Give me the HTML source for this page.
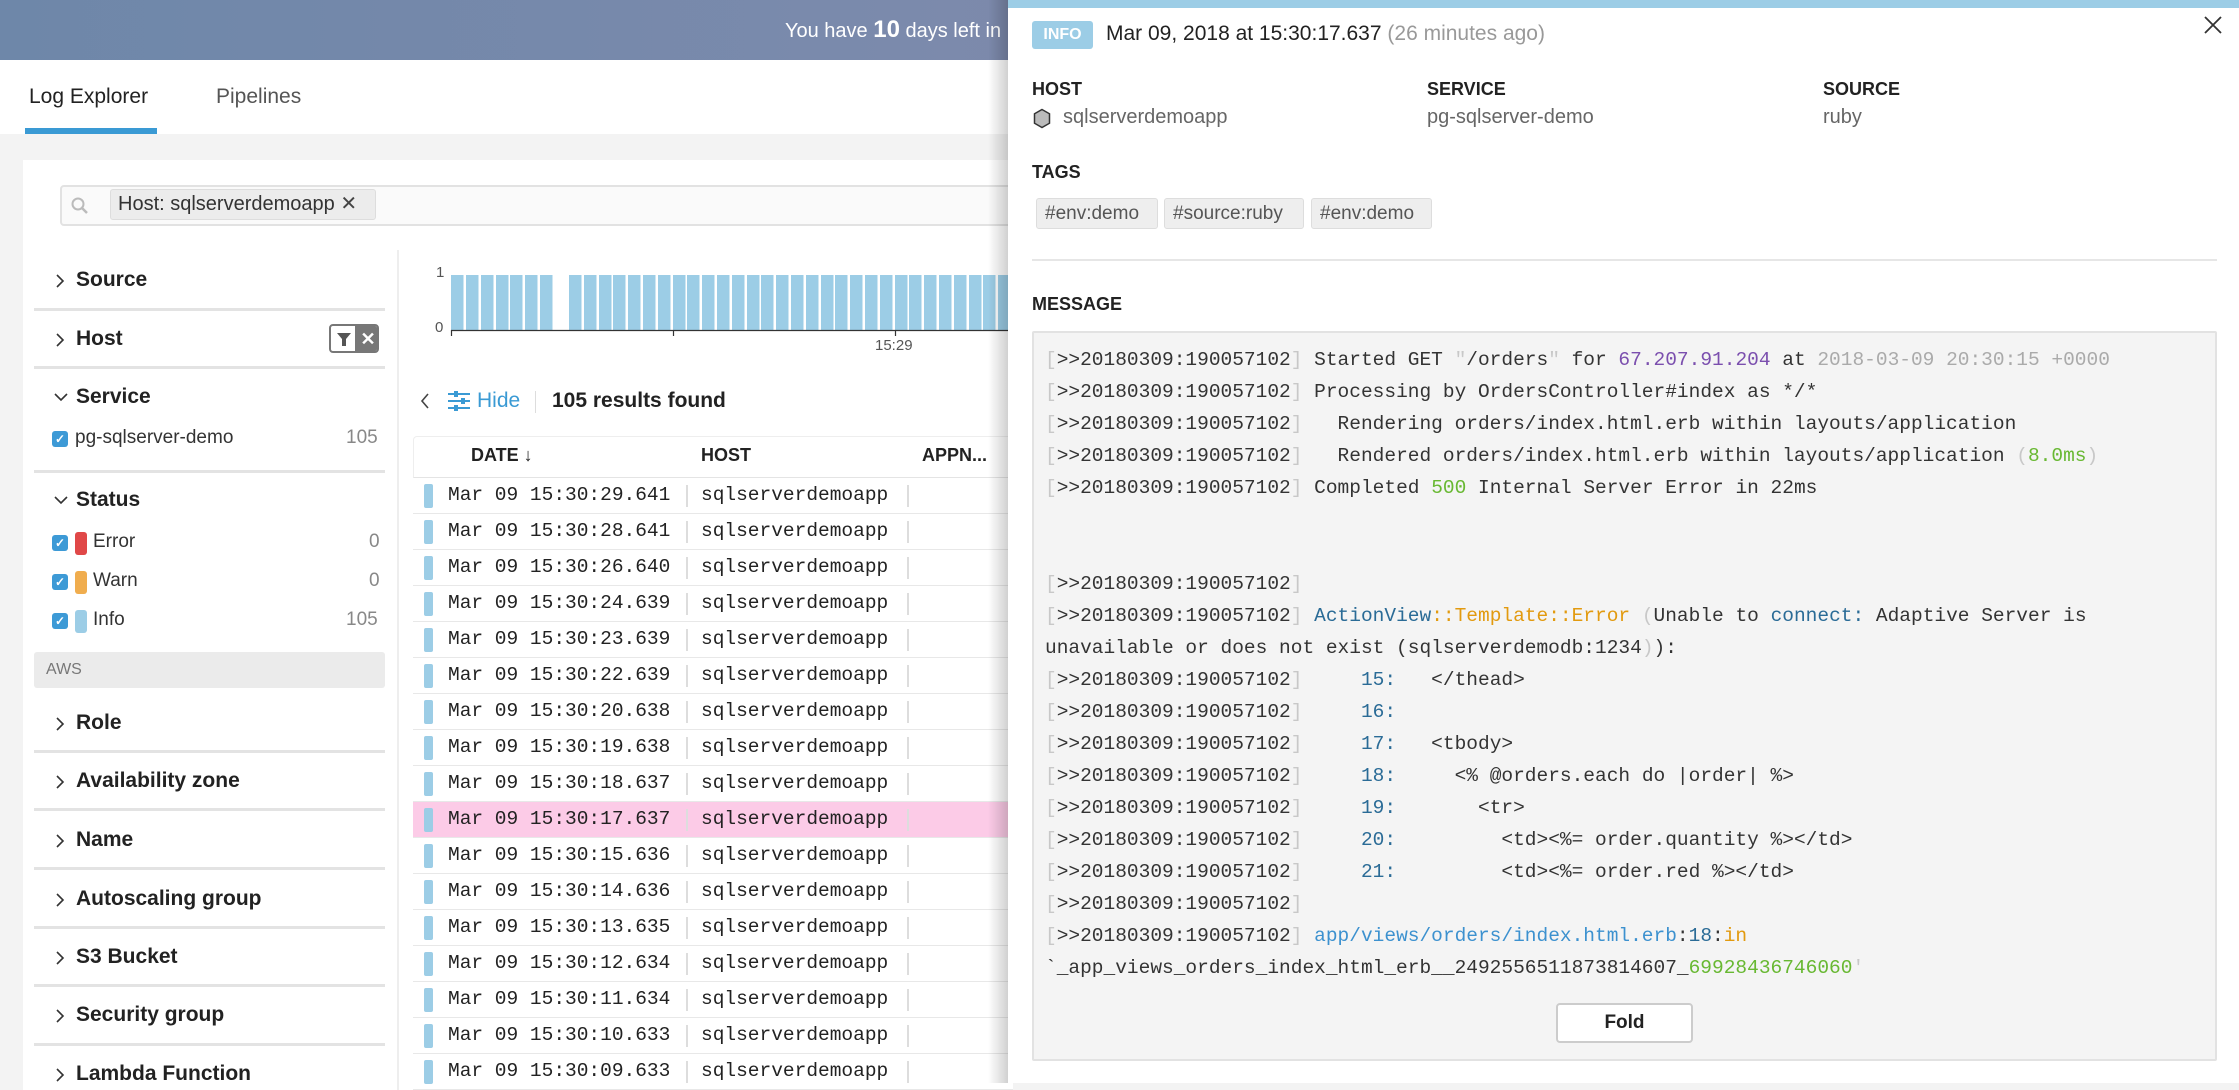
<!DOCTYPE html>
<html><head><meta charset="utf-8"><style>
*{margin:0;padding:0;box-sizing:border-box}
body{width:2239px;height:1083px;overflow:hidden;position:relative;background:#f3f3f3;font-family:"Liberation Sans",sans-serif;color:#222}
.a{position:absolute;white-space:nowrap}
.mono{font-family:"Liberation Mono","DejaVu Sans Mono",monospace}
.sec{position:absolute;left:34px;width:351px;font-weight:bold;font-size:21px;color:#222}
.sec svg{position:absolute;left:20px;top:-6px}
.sec .t{position:absolute;left:42px;top:-12px}
.div{position:absolute;left:34px;width:351px;height:3px;background:#e3e3e3}
.cb{position:absolute;left:52px;width:16px;height:16px;background:#3d9ad6;border-radius:3px;color:#fff;font-size:12px;line-height:16px;text-align:center;font-weight:bold}
.bar{position:absolute;width:12px;height:23px;border-radius:3px}
.row{position:absolute;left:413px;width:600px;height:36px;border-bottom:1px solid #e8e8e8;background:#fff;font-size:19.5px}
.row .m{position:absolute;left:11px;top:6px;width:9px;height:24px;background:#9ccde6;border-radius:2px}
.row .d{position:absolute;left:35px;top:6px}
.row .s1{position:absolute;left:273px;top:7px;width:2px;height:22px;background:#ddd}
.row .h{position:absolute;left:288px;top:6px}
.row .s2{position:absolute;left:494px;top:7px;width:2px;height:22px;background:#ddd}
.code{position:absolute;left:1045px;top:344px;font-size:19.5px;line-height:32px;color:#333;white-space:pre}
.g{color:#c8c8c8}.pu{color:#7b4fae}.lg{color:#aaa}.gr{color:#68b832}.bl{color:#2a6b96}.or{color:#e29a0f}.lb{color:#3c91cf}
.tag{position:absolute;top:198px;height:31px;background:#eee;border:1px solid #ddd;border-radius:3px;font-size:19px;color:#555;line-height:29px;padding:0 8px}
.lab{position:absolute;font-weight:bold;font-size:18px;color:#222}
.val{position:absolute;font-size:20px;color:#666}
</style></head><body>
<div class="a" style="left:0;top:0;width:2239px;height:60px;background:linear-gradient(90deg,#6e87a9 0%,#7b8aac 40%,#8a80a1 100%)"></div>
<div class="a" style="left:785px;top:16px;color:#fff;font-size:20px">You have <b style="font-size:24px">10</b> days left in</div>
<div class="a" style="left:0;top:60px;width:1010px;height:74px;background:#fff"></div>
<div class="a" style="left:29px;top:85px;font-size:21px;color:#222">Log Explorer</div>
<div class="a" style="left:216px;top:85px;font-size:21px;color:#555">Pipelines</div>
<div class="a" style="left:25px;top:128px;width:132px;height:6px;background:#3a9ad4"></div>
<div class="a" style="left:23px;top:160px;width:990px;height:930px;background:#fff"></div>
<div class="a" style="left:60px;top:185px;width:960px;height:41px;border:2px solid #e2e2e2;border-radius:4px;background:#fafafa"></div>
<svg class="a" style="left:70px;top:196px" width="20" height="20" viewBox="0 0 20 20"><circle cx="8" cy="8" r="5.5" fill="none" stroke="#bbb" stroke-width="2"/><path d="M12 12l5 5" stroke="#bbb" stroke-width="2.5"/></svg>
<div class="a" style="left:110px;top:189px;width:266px;height:31px;background:#ececec;border:1px solid #ddd;border-radius:3px;font-size:20px;color:#333;line-height:29px;padding-left:7px">Host: sqlserverdemoapp <span style="color:#444">✕</span></div>
<div class="a" style="left:397px;top:250px;width:2px;height:840px;background:#eee"></div>
<div class="sec" style="top:280px"><svg width="12" height="14"><path d="M3 1l6 6-6 6" fill="none" stroke="#333" stroke-width="1.6"/></svg><span class="t">Source</span></div>
<div class="div" style="top:308px"></div>
<div class="sec" style="top:339px"><svg width="12" height="14"><path d="M3 1l6 6-6 6" fill="none" stroke="#333" stroke-width="1.6"/></svg><span class="t">Host</span></div>
<div class="a" style="left:329px;top:324px;width:50px;height:29px;border:2px solid #777;border-radius:4px;background:#fff;overflow:hidden"><div class="a" style="left:24px;top:0;width:26px;height:29px;background:#777;color:#fff;font-size:18px;text-align:center;line-height:26px;font-weight:bold">✕</div><svg class="a" style="left:5px;top:5px" width="16" height="16" viewBox="0 0 16 16"><path d="M1 2h14l-5 6v7h-4V8z" fill="#555"/></svg></div>
<div class="div" style="top:366px"></div>
<div class="sec" style="top:397px"><svg width="14" height="12"><path d="M1 3l6 6 6-6" fill="none" stroke="#333" stroke-width="1.6"/></svg><span class="t">Service</span></div>
<div class="cb" style="top:431px">✓</div>
<div class="a" style="left:75px;top:427px;font-size:19px;color:#333">pg-sqlserver-demo</div>
<div class="a" style="left:346px;top:427px;font-size:19px;color:#888">105</div>
<div class="div" style="top:470px"></div>
<div class="sec" style="top:500px"><svg width="14" height="12"><path d="M1 3l6 6 6-6" fill="none" stroke="#333" stroke-width="1.6"/></svg><span class="t">Status</span></div>
<div class="cb" style="top:535px">✓</div><div class="bar" style="left:75px;top:532px;background:#e04848"></div>
<div class="a" style="left:93px;top:531px;font-size:19px;color:#333">Error</div><div class="a" style="left:369px;top:531px;font-size:19px;color:#888">0</div>
<div class="cb" style="top:574px">✓</div><div class="bar" style="left:75px;top:571px;background:#f0ad4e"></div>
<div class="a" style="left:93px;top:570px;font-size:19px;color:#333">Warn</div><div class="a" style="left:369px;top:570px;font-size:19px;color:#888">0</div>
<div class="cb" style="top:613px">✓</div><div class="bar" style="left:75px;top:610px;background:#9ccde6"></div>
<div class="a" style="left:93px;top:609px;font-size:19px;color:#333">Info</div><div class="a" style="left:346px;top:609px;font-size:19px;color:#888">105</div>
<div class="a" style="left:34px;top:652px;width:351px;height:36px;background:#ebebeb;border-radius:3px;font-size:16px;color:#777;line-height:36px;padding-left:12px">AWS</div>
<div class="sec" style="top:723px"><svg width="12" height="14"><path d="M3 1l6 6-6 6" fill="none" stroke="#333" stroke-width="1.6"/></svg><span class="t">Role</span></div>
<div class="div" style="top:750px"></div>
<div class="sec" style="top:781px"><svg width="12" height="14"><path d="M3 1l6 6-6 6" fill="none" stroke="#333" stroke-width="1.6"/></svg><span class="t">Availability zone</span></div>
<div class="div" style="top:808px"></div>
<div class="sec" style="top:840px"><svg width="12" height="14"><path d="M3 1l6 6-6 6" fill="none" stroke="#333" stroke-width="1.6"/></svg><span class="t">Name</span></div>
<div class="div" style="top:867px"></div>
<div class="sec" style="top:899px"><svg width="12" height="14"><path d="M3 1l6 6-6 6" fill="none" stroke="#333" stroke-width="1.6"/></svg><span class="t">Autoscaling group</span></div>
<div class="div" style="top:926px"></div>
<div class="sec" style="top:957px"><svg width="12" height="14"><path d="M3 1l6 6-6 6" fill="none" stroke="#333" stroke-width="1.6"/></svg><span class="t">S3 Bucket</span></div>
<div class="div" style="top:984px"></div>
<div class="sec" style="top:1015px"><svg width="12" height="14"><path d="M3 1l6 6-6 6" fill="none" stroke="#333" stroke-width="1.6"/></svg><span class="t">Security group</span></div>
<div class="div" style="top:1043px"></div>
<div class="sec" style="top:1074px"><svg width="12" height="14"><path d="M3 1l6 6-6 6" fill="none" stroke="#333" stroke-width="1.6"/></svg><span class="t">Lambda Function</span></div>
<div class="a" style="left:436px;top:264px;font-size:15px;color:#555">1</div>
<div class="a" style="left:435px;top:319px;font-size:15px;color:#555">0</div>
<svg class="a" style="left:440px;top:270px" width="570" height="90">
<g fill="#9ccde6">
<rect x="11" y="5" width="12.5" height="55"/><rect x="26" y="5" width="12.5" height="55"/><rect x="41" y="5" width="12.5" height="55"/><rect x="56" y="5" width="12.5" height="55"/><rect x="70" y="5" width="12.5" height="55"/><rect x="85" y="5" width="12.5" height="55"/><rect x="100" y="5" width="12.5" height="55"/>
<rect x="129" y="5" width="12.5" height="55"/><rect x="144" y="5" width="12.5" height="55"/><rect x="159" y="5" width="12.5" height="55"/><rect x="173" y="5" width="12.5" height="55"/><rect x="188" y="5" width="12.5" height="55"/><rect x="203" y="5" width="12.5" height="55"/><rect x="218" y="5" width="12.5" height="55"/><rect x="233" y="5" width="12.5" height="55"/><rect x="247" y="5" width="12.5" height="55"/><rect x="262" y="5" width="12.5" height="55"/><rect x="277" y="5" width="12.5" height="55"/><rect x="292" y="5" width="12.5" height="55"/><rect x="307" y="5" width="12.5" height="55"/><rect x="321" y="5" width="12.5" height="55"/><rect x="336" y="5" width="12.5" height="55"/><rect x="351" y="5" width="12.5" height="55"/><rect x="366" y="5" width="12.5" height="55"/><rect x="381" y="5" width="12.5" height="55"/><rect x="395" y="5" width="12.5" height="55"/><rect x="410" y="5" width="12.5" height="55"/><rect x="425" y="5" width="12.5" height="55"/><rect x="440" y="5" width="12.5" height="55"/><rect x="455" y="5" width="12.5" height="55"/><rect x="469" y="5" width="12.5" height="55"/><rect x="484" y="5" width="12.5" height="55"/><rect x="499" y="5" width="12.5" height="55"/><rect x="514" y="5" width="12.5" height="55"/><rect x="529" y="5" width="12.5" height="55"/><rect x="543" y="5" width="12.5" height="55"/><rect x="558" y="5" width="12.5" height="55"/>
</g>
<path d="M11 60.5H570M11.5 60v6M233.5 60v6M455.5 60v6" stroke="#333" stroke-width="1.2"/>
</svg>
<div class="a" style="left:875px;top:337px;font-size:15px;color:#555">15:29</div>
<svg class="a" style="left:420px;top:393px" width="10" height="16"><path d="M8 1L2 8l6 7" fill="none" stroke="#444" stroke-width="1.6"/></svg>
<svg class="a" style="left:448px;top:391px" width="22" height="20" viewBox="0 0 22 20"><g stroke="#3a9ad4" stroke-width="2"><path d="M0 3h22M0 10h22M0 17h22"/></g><g fill="#3a9ad4"><rect x="6" y="0" width="4" height="6"/><rect x="13" y="7" width="4" height="6"/><rect x="6" y="14" width="4" height="6"/></g></svg>
<div class="a" style="left:477px;top:389px;font-size:21px;color:#3a9ad4">Hide</div>
<div class="a" style="left:535px;top:391px;width:1px;height:22px;background:#ddd"></div>
<div class="a" style="left:552px;top:389px;font-size:21px;font-weight:bold;color:#222">105 results found</div>
<div class="a" style="left:413px;top:436px;width:600px;height:42px;border:1px solid #eee;border-bottom:1px solid #e4e4e4;border-radius:4px 0 0 0;background:#fff"></div>
<div class="a" style="left:471px;top:445px;font-size:18px;font-weight:bold;color:#222">DATE ↓</div>
<div class="a" style="left:701px;top:445px;font-size:18px;font-weight:bold;color:#222">HOST</div>
<div class="a" style="left:922px;top:445px;font-size:18px;font-weight:bold;color:#222">APPN...</div>
<div class="mono">
<div class="row" style="top:478px"><div class="m"></div><span class="d">Mar 09 15:30:29.641</span><div class="s1"></div><span class="h">sqlserverdemoapp</span><div class="s2"></div></div>
<div class="row" style="top:514px"><div class="m"></div><span class="d">Mar 09 15:30:28.641</span><div class="s1"></div><span class="h">sqlserverdemoapp</span><div class="s2"></div></div>
<div class="row" style="top:550px"><div class="m"></div><span class="d">Mar 09 15:30:26.640</span><div class="s1"></div><span class="h">sqlserverdemoapp</span><div class="s2"></div></div>
<div class="row" style="top:586px"><div class="m"></div><span class="d">Mar 09 15:30:24.639</span><div class="s1"></div><span class="h">sqlserverdemoapp</span><div class="s2"></div></div>
<div class="row" style="top:622px"><div class="m"></div><span class="d">Mar 09 15:30:23.639</span><div class="s1"></div><span class="h">sqlserverdemoapp</span><div class="s2"></div></div>
<div class="row" style="top:658px"><div class="m"></div><span class="d">Mar 09 15:30:22.639</span><div class="s1"></div><span class="h">sqlserverdemoapp</span><div class="s2"></div></div>
<div class="row" style="top:694px"><div class="m"></div><span class="d">Mar 09 15:30:20.638</span><div class="s1"></div><span class="h">sqlserverdemoapp</span><div class="s2"></div></div>
<div class="row" style="top:730px"><div class="m"></div><span class="d">Mar 09 15:30:19.638</span><div class="s1"></div><span class="h">sqlserverdemoapp</span><div class="s2"></div></div>
<div class="row" style="top:766px"><div class="m"></div><span class="d">Mar 09 15:30:18.637</span><div class="s1"></div><span class="h">sqlserverdemoapp</span><div class="s2"></div></div>
<div class="row" style="top:802px;background:#fccbe7"><div class="m"></div><span class="d">Mar 09 15:30:17.637</span><div class="s1"></div><span class="h">sqlserverdemoapp</span><div class="s2"></div></div>
<div class="row" style="top:838px"><div class="m"></div><span class="d">Mar 09 15:30:15.636</span><div class="s1"></div><span class="h">sqlserverdemoapp</span><div class="s2"></div></div>
<div class="row" style="top:874px"><div class="m"></div><span class="d">Mar 09 15:30:14.636</span><div class="s1"></div><span class="h">sqlserverdemoapp</span><div class="s2"></div></div>
<div class="row" style="top:910px"><div class="m"></div><span class="d">Mar 09 15:30:13.635</span><div class="s1"></div><span class="h">sqlserverdemoapp</span><div class="s2"></div></div>
<div class="row" style="top:946px"><div class="m"></div><span class="d">Mar 09 15:30:12.634</span><div class="s1"></div><span class="h">sqlserverdemoapp</span><div class="s2"></div></div>
<div class="row" style="top:982px"><div class="m"></div><span class="d">Mar 09 15:30:11.634</span><div class="s1"></div><span class="h">sqlserverdemoapp</span><div class="s2"></div></div>
<div class="row" style="top:1018px"><div class="m"></div><span class="d">Mar 09 15:30:10.633</span><div class="s1"></div><span class="h">sqlserverdemoapp</span><div class="s2"></div></div>
<div class="row" style="top:1054px"><div class="m"></div><span class="d">Mar 09 15:30:09.633</span><div class="s1"></div><span class="h">sqlserverdemoapp</span><div class="s2"></div></div>
</div>
<div class="a" style="left:988px;top:0;width:20px;height:1083px;background:linear-gradient(90deg,rgba(0,0,0,0),rgba(0,0,0,0.18))"></div>
<div class="a" style="left:1008px;top:0;width:1231px;height:1083px;background:#fff"></div>
<div class="a" style="left:1008px;top:0;width:1231px;height:8px;background:#9ccde6"></div>
<div class="a" style="left:1032px;top:21px;width:61px;height:28px;background:#9ccde6;border-radius:3px;color:#fff;font-weight:bold;font-size:16px;text-align:center;line-height:28px">INFO</div>
<div class="a" style="left:1106px;top:22px;font-size:21px;color:#222">Mar 09, 2018 at 15:30:17.637 <span style="color:#999">(26 minutes ago)</span></div>
<svg class="a" style="left:2204px;top:16px" width="18" height="18" viewBox="0 0 18 18"><path d="M1 1L17 17M17 1L1 17" stroke="#333" stroke-width="1.8"/></svg>
<div class="lab" style="left:1032px;top:79px">HOST</div>
<div class="lab" style="left:1427px;top:79px">SERVICE</div>
<div class="lab" style="left:1823px;top:79px">SOURCE</div>
<svg class="a" style="left:1033px;top:108px" width="18" height="21" viewBox="0 0 18 21"><path d="M9 1.5L16.5 5.75V15.25L9 19.5L1.5 15.25V5.75Z" fill="#bbb" stroke="#333" stroke-width="1.5"/></svg>
<div class="val" style="left:1063px;top:106px">sqlserverdemoapp</div>
<div class="val" style="left:1427px;top:106px">pg-sqlserver-demo</div>
<div class="val" style="left:1823px;top:106px">ruby</div>
<div class="lab" style="left:1032px;top:162px">TAGS</div>
<div class="tag" style="left:1036px;width:122px">#env:demo</div>
<div class="tag" style="left:1164px;width:140px">#source:ruby</div>
<div class="tag" style="left:1311px;width:121px">#env:demo</div>
<div class="a" style="left:1032px;top:259px;width:1185px;height:2px;background:#e6e6e6"></div>
<div class="lab" style="left:1032px;top:294px">MESSAGE</div>
<div class="a" style="left:1032px;top:331px;width:1185px;height:730px;background:#f4f4f4;border:2px solid #e2e2e2;border-radius:2px"></div>
<div class="code mono"><span class="g">[</span>&gt;&gt;20180309:190057102<span class="g">]</span> Started GET <span class="g">"</span>/orders<span class="g">"</span> for <span class="pu">67.207.91.204</span> at <span class="lg">2018-03-09 20:30:15 +0000</span>
<span class="g">[</span>&gt;&gt;20180309:190057102<span class="g">]</span> Processing by OrdersController#index as */*
<span class="g">[</span>&gt;&gt;20180309:190057102<span class="g">]</span>   Rendering orders/index.html.erb within layouts/application
<span class="g">[</span>&gt;&gt;20180309:190057102<span class="g">]</span>   Rendered orders/index.html.erb within layouts/application <span class="g">(</span><span class="gr">8.0ms</span><span class="g">)</span>
<span class="g">[</span>&gt;&gt;20180309:190057102<span class="g">]</span> Completed <span class="gr">500</span> Internal Server Error in 22ms


<span class="g">[</span>&gt;&gt;20180309:190057102<span class="g">]</span>
<span class="g">[</span>&gt;&gt;20180309:190057102<span class="g">]</span> <span class="bl">ActionView</span><span class="or">::Template::Error</span> <span class="g">(</span>Unable to <span class="bl">connect:</span> Adaptive Server is
unavailable or does not exist (sqlserverdemodb:1234<span class="g">)</span>):
<span class="g">[</span>&gt;&gt;20180309:190057102<span class="g">]</span>     <span class="bl">15:</span>   &lt;/thead&gt;
<span class="g">[</span>&gt;&gt;20180309:190057102<span class="g">]</span>     <span class="bl">16:</span>
<span class="g">[</span>&gt;&gt;20180309:190057102<span class="g">]</span>     <span class="bl">17:</span>   &lt;tbody&gt;
<span class="g">[</span>&gt;&gt;20180309:190057102<span class="g">]</span>     <span class="bl">18:</span>     &lt;% @orders.each do |order| %&gt;
<span class="g">[</span>&gt;&gt;20180309:190057102<span class="g">]</span>     <span class="bl">19:</span>       &lt;tr&gt;
<span class="g">[</span>&gt;&gt;20180309:190057102<span class="g">]</span>     <span class="bl">20:</span>         &lt;td&gt;&lt;%= order.quantity %&gt;&lt;/td&gt;
<span class="g">[</span>&gt;&gt;20180309:190057102<span class="g">]</span>     <span class="bl">21:</span>         &lt;td&gt;&lt;%= order.red %&gt;&lt;/td&gt;
<span class="g">[</span>&gt;&gt;20180309:190057102<span class="g">]</span>
<span class="g">[</span>&gt;&gt;20180309:190057102<span class="g">]</span> <span class="lb">app/views/orders/index.html.erb</span>:<span class="bl">18</span>:<span class="or">in</span>
`_app_views_orders_index_html_erb__2492556511873814607_<span class="gr">69928436746060</span><span class="g">'</span></div>
<div class="a" style="left:1556px;top:1003px;width:137px;height:40px;background:#fff;border:2px solid #ccc;border-radius:4px;text-align:center;line-height:36px;font-size:19px;font-weight:bold;color:#222">Fold</div>
</body></html>
